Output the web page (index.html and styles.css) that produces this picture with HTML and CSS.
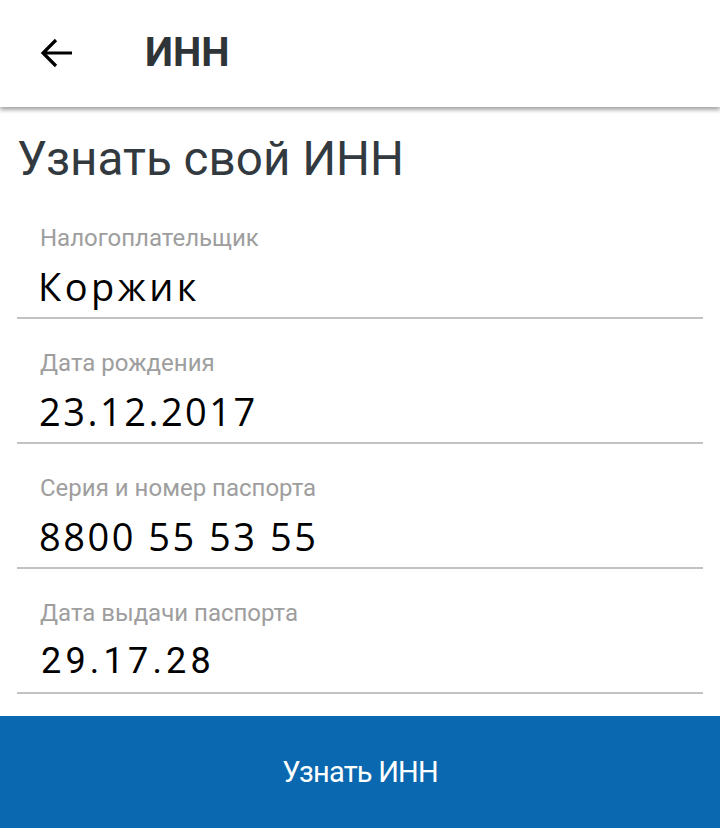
FILE: index.html
```html
<!DOCTYPE html>
<html lang="ru">
<head>
<meta charset="utf-8">
<link rel="stylesheet" href="styles.css">
</head>
<body>
<div class="app">
  <header class="topbar">
    <svg class="back" width="34" height="32" viewBox="0 0 34 32"><path d="M33 16H4M17 3L4 16l13 13" fill="none" stroke="#000" stroke-width="3.2"/></svg>
    <h1 class="title">ИНН</h1>
  </header>
  <main class="content">
    <h2 class="heading">Узнать свой ИНН</h2>
    <div class="field">
      <div class="label">Налогоплательщик</div>
      <div class="value name">Коржик</div>
    </div>
    <div class="field">
      <div class="label">Дата рождения</div>
      <div class="value">23.12.2017</div>
    </div>
    <div class="field">
      <div class="label">Серия и номер паспорта</div>
      <div class="value">8800 55 53 55</div>
    </div>
    <div class="field">
      <div class="label">Дата выдачи паспорта</div>
      <div class="value narrow">29.17.28</div>
    </div>
  </main>
  <button class="submit">Узнать ИНН</button>
</div>
</body>
</html>
```
FILE: styles.css
```css
* { box-sizing: border-box; }
html, body { margin: 0; padding: 0; background: #fff; }
body { font-family: Roboto, "Noto Sans", sans-serif; }
.app { width: 720px; height: 828px; display: flex; flex-direction: column; overflow: hidden; }
.topbar {
  height: 107px; flex: none; display: flex; align-items: center;
  padding-left: 39px; gap: 72px;
  box-shadow: 0 3px 4px rgba(0,0,0,0.35);
  position: relative; z-index: 1;
}
.back { display: block; margin-top: -2px; }
.title { margin: 0; font-size: 40px; font-weight: 700; color: #2f3438; margin-top: -2px; }
.content { flex: 1; padding: 0 17px 0 17px; }
.heading { margin: 24px 0 7px 0; font-size: 47.6px; font-weight: 400; color: #32393f; line-height: 56px; }
.field { height: 125px; border-bottom: 2px solid #c2c2c2; padding: 30px 0 0 23px; }
.label { font-size: 24px; color: #9e9e9e; line-height: 28px; }
.value { font-family: "Open Sans", sans-serif; font-size: 38px; color: #000; letter-spacing: 2.5px; line-height: 44px; margin-top: 12px; margin-left: -1px; }
.name { margin-left: -2px; letter-spacing: 3.5px; }
.narrow { font-family: Roboto, sans-serif; font-size: 36px; letter-spacing: 4.2px; margin-left: 1px; }
.submit {
  height: 112px; flex: none; border: 0; background: #0a68b0; color: #fff;
  font-family: Roboto, sans-serif; font-size: 29px; letter-spacing: -0.8px; width: 100%;
}
```
